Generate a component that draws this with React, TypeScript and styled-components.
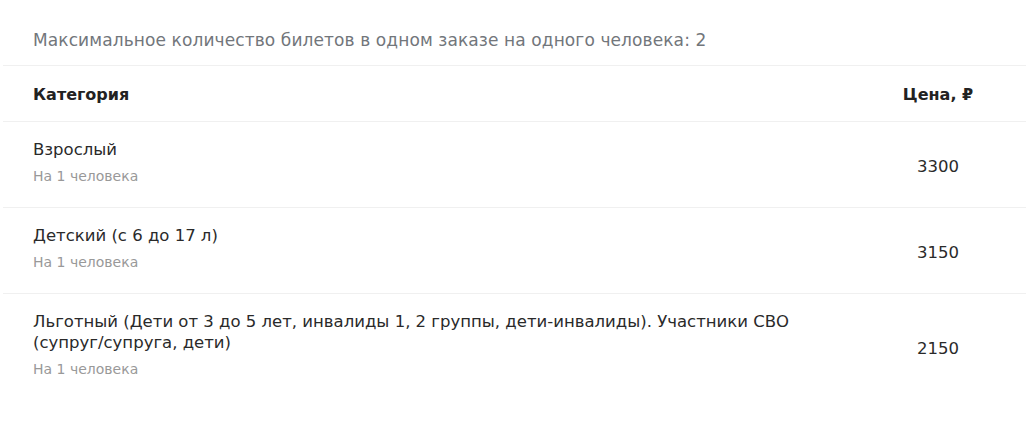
import React from "react";
import styled, { createGlobalStyle } from "styled-components";

const Global = createGlobalStyle`
  html, body { margin: 0; padding: 0; background: #fff; }
  body { font-family: "DejaVu Sans", sans-serif; }
`;

const Wrap = styled.div`
  padding: 0 0 0 3px;
`;

const Limit = styled.div`
  padding: 29px 30px 14px;
  font-size: 17px;
  letter-spacing: 0.1px;
  line-height: 22px;
  color: #72767b;
`;

const Table = styled.div`
  display: flex;
  flex-direction: column;
`;

const Row = styled.div<{ $head?: boolean }>`
  display: grid;
  grid-template-columns: 1fr 140px;
  column-gap: 60px;
  align-items: center;
  border-top: 1px solid #f0f0f0;
  padding: ${(p) => (p.$head ? "18px 18px 15px 30px" : "17px 18px 21px 30px")};
`;

const HeadCell = styled.div<{ $center?: boolean }>`
  font-weight: 700;
  font-size: 16px;
  line-height: 22px;
  color: #222;
  text-align: ${(p) => (p.$center ? "center" : "left")};
`;

const Name = styled.div`
  font-size: 16.5px;
  line-height: 21px;
  color: #2a2a2a;
`;

const Sub = styled.div`
  margin-top: 6px;
  font-size: 14px;
  line-height: 20px;
  color: #999;
`;

const Price = styled.div`
  padding-top: 8px;
  font-size: 16.5px;
  line-height: 22px;
  color: #2a2a2a;
  text-align: center;
`;

const rows = [
  { name: "Взрослый", price: 3300 },
  { name: "Детский (с 6 до 17 л)", price: 3150 },
  {
    name: "Льготный (Дети от 3 до 5 лет, инвалиды 1, 2 группы, дети-инвалиды). Участники СВО (супруг/супруга, дети)",
    price: 2150,
  },
];

export default function App() {
  return (
    <Wrap>
      <Global />
      <Limit>Максимальное количество билетов в одном заказе на одного человека: 2</Limit>
      <Table>
        <Row $head>
          <HeadCell>Категория</HeadCell>
          <HeadCell $center>Цена, ₽</HeadCell>
        </Row>
        {rows.map((r) => (
          <Row key={r.name}>
            <div>
              <Name>{r.name}</Name>
              <Sub>На 1 человека</Sub>
            </div>
            <Price>{r.price}</Price>
          </Row>
        ))}
      </Table>
    </Wrap>
  );
}
